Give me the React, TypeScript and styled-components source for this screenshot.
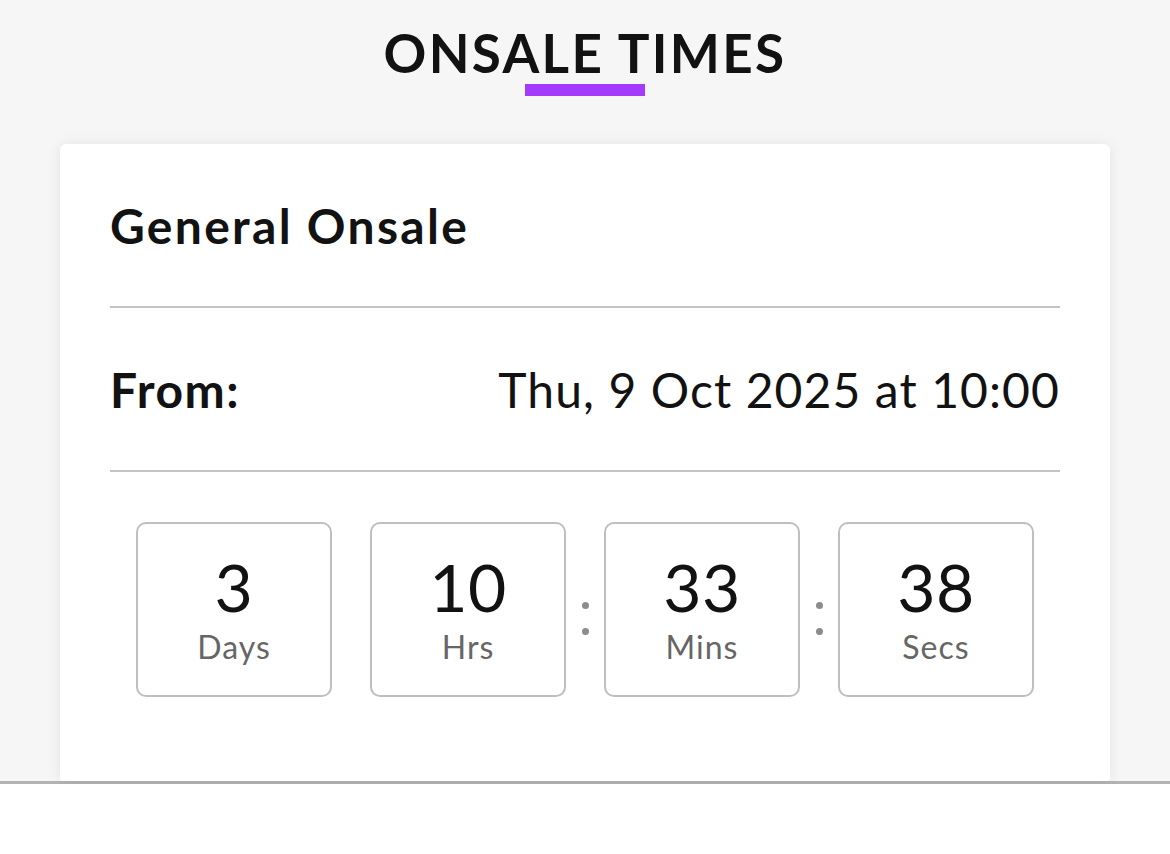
import React from "react";
import styled, { createGlobalStyle } from "styled-components";

const GlobalStyle = createGlobalStyle`
  body {
    margin: 0;
    background: #ffffff;
    font-family: "Lato", "Noto Sans", sans-serif;
    color: #121212;
  }
`;

const Section = styled.section`
  background: #f6f6f6;
  padding-top: 22px;
  border-bottom: 3px solid #b3b3b3;
  box-shadow: 0 8px 18px rgba(0, 0, 0, 0.1);
`;

const Heading = styled.h2`
  margin: 0;
  text-align: center;
  font-size: 53px;
  line-height: 62px;
  font-weight: 700;
  letter-spacing: 2.3px;
  color: #121212;
`;

const Underline = styled.div`
  width: 120px;
  height: 12px;
  margin: 0 auto 48px;
  background: #a23bfb;
`;

const Card = styled.div`
  margin: 0 60px;
  padding: 0 50px;
  background: #ffffff;
  border-radius: 6px 6px 3px 3px;
  box-shadow: 0 0 14px rgba(0, 0, 0, 0.08);
`;

const Row = styled.div<{ $split?: boolean }>`
  height: 162px;
  display: flex;
  align-items: center;
  justify-content: ${({ $split }) => ($split ? "space-between" : "flex-start")};
  border-bottom: 2px solid #c4c4c4;
`;

const Title = styled.div`
  font-size: 48px;
  font-weight: 700;
  letter-spacing: 2.3px;
`;

const Label = styled.div`
  font-size: 48px;
  font-weight: 700;
  letter-spacing: 1.5px;
`;

const Value = styled.div`
  font-size: 48px;
  font-weight: 400;
  letter-spacing: 1.1px;
`;

const Countdown = styled.div`
  display: flex;
  justify-content: center;
  padding: 50px 0 84px;
`;

const UnitBox = styled.div`
  width: 196px;
  height: 175px;
  box-sizing: border-box;
  border: 2px solid #bfbfbf;
  border-radius: 10px;
  display: flex;
  flex-direction: column;
  align-items: center;
  justify-content: center;
`;

const Number = styled.div`
  font-size: 66px;
  line-height: 66px;
  color: #121212;
  letter-spacing: 0.5px;
`;

const Unit = styled.div`
  margin-top: 9px;
  font-size: 32px;
  line-height: 36px;
  color: #666666;
  letter-spacing: 1px;
`;

const Separator = styled.div<{ $dots?: boolean }>`
  width: 38px;
  display: flex;
  flex-direction: column;
  align-items: center;
  justify-content: center;
  gap: 19px;
  padding-top: 17px;

  span {
    display: ${({ $dots }) => ($dots ? "block" : "none")};
    width: 7px;
    height: 7px;
    border-radius: 50%;
    background: #8c8c8c;
  }
`;

const units = [
  { value: "3", label: "Days" },
  { value: "10", label: "Hrs" },
  { value: "33", label: "Mins" },
  { value: "38", label: "Secs" },
];

export default function App() {
  return (
    <>
      <GlobalStyle />
      <Section>
        <Heading>ONSALE TIMES</Heading>
        <Underline />
        <Card>
          <Row>
            <Title>General Onsale</Title>
          </Row>
          <Row $split>
            <Label>From:</Label>
            <Value>Thu, 9 Oct 2025 at 10:00</Value>
          </Row>
          <Countdown>
            {units.map((u, i) => (
              <React.Fragment key={u.label}>
                {i > 0 && (
                  <Separator $dots={i > 1}>
                    <span />
                    <span />
                  </Separator>
                )}
                <UnitBox>
                  <Number>{u.value}</Number>
                  <Unit>{u.label}</Unit>
                </UnitBox>
              </React.Fragment>
            ))}
          </Countdown>
        </Card>
      </Section>
    </>
  );
}
